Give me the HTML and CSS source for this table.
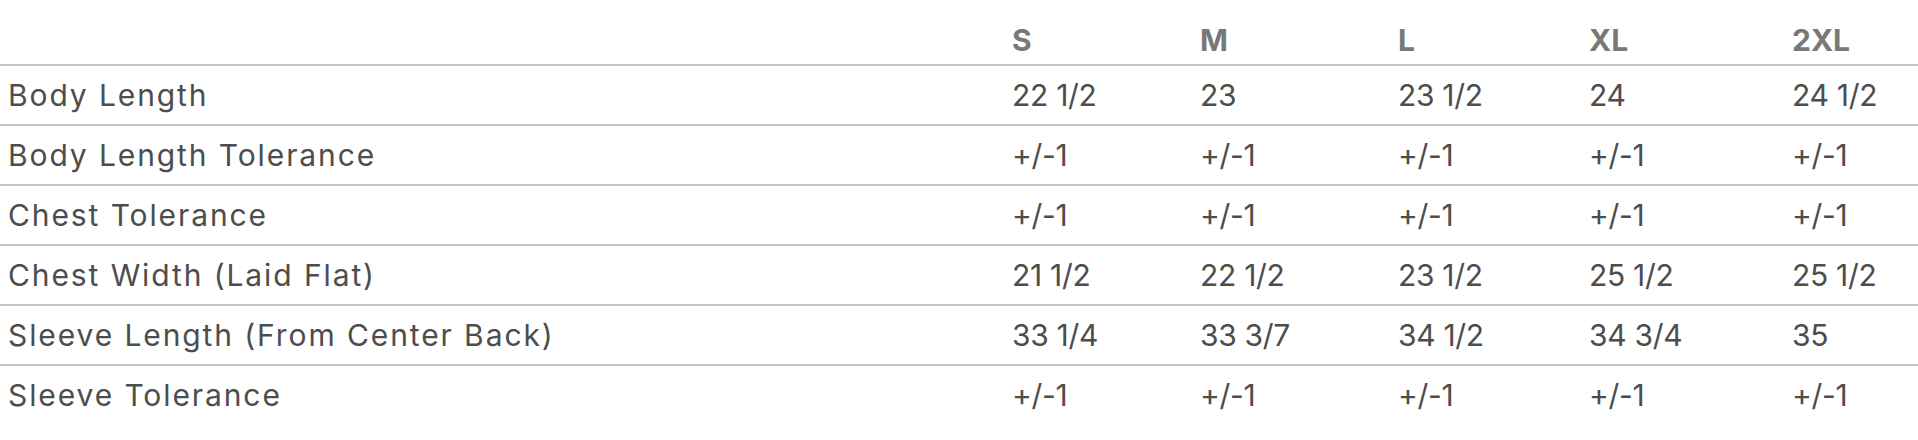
FILE: index.html
```html
<!DOCTYPE html>
<html lang="en">
<head>
<meta charset="utf-8">
<title>Size Chart</title>
<link rel="stylesheet" href="styles.css">
</head>
<body>
<table class="size-table">
  <colgroup>
    <col class="c-label">
    <col class="c-s">
    <col class="c-m">
    <col class="c-l">
    <col class="c-xl">
    <col class="c-2xl">
  </colgroup>
  <thead>
    <tr>
      <th></th>
      <th>S</th>
      <th>M</th>
      <th>L</th>
      <th>XL</th>
      <th>2XL</th>
    </tr>
  </thead>
  <tbody>
    <tr><td class="label">Body Length</td><td>22 1/2</td><td>23</td><td>23 1/2</td><td>24</td><td>24 1/2</td></tr>
    <tr><td class="label">Body Length Tolerance</td><td>+/-1</td><td>+/-1</td><td>+/-1</td><td>+/-1</td><td>+/-1</td></tr>
    <tr><td class="label">Chest Tolerance</td><td>+/-1</td><td>+/-1</td><td>+/-1</td><td>+/-1</td><td>+/-1</td></tr>
    <tr><td class="label">Chest Width (Laid Flat)</td><td>21 1/2</td><td>22 1/2</td><td>23 1/2</td><td>25 1/2</td><td>25 1/2</td></tr>
    <tr><td class="label">Sleeve Length (From Center Back)</td><td>33 1/4</td><td>33 3/7</td><td>34 1/2</td><td>34 3/4</td><td>35</td></tr>
    <tr><td class="label">Sleeve Tolerance</td><td>+/-1</td><td>+/-1</td><td>+/-1</td><td>+/-1</td><td>+/-1</td></tr>
  </tbody>
</table>
</body>
</html>
```
FILE: styles.css
```css
html, body {
  margin: 0;
  padding: 0;
  background: #ffffff;
}

body {
  font-family: "Inter", "Liberation Sans", sans-serif;
  font-size: 30px;
  color: #4d4d4d;
}

.size-table {
  width: 1918px;
  border-collapse: collapse;
  table-layout: fixed;
}

.c-label { width: 1004px; }
.c-s { width: 188px; }
.c-m { width: 198px; }
.c-l { width: 191px; }
.c-xl { width: 203px; }
.c-2xl { width: 134px; }

.size-table th {
  text-align: left;
  font-weight: 700;
  color: #787878;
  line-height: 36px;
  height: 36px;
  padding: 22px 0 6px 8px;
  border-bottom: 2px solid #c4c4c4;
}

.size-table td {
  text-align: left;
  font-weight: 400;
  line-height: 36px;
  height: 36px;
  padding: 11px 0 11px 8px;
  border-bottom: 2px solid #c4c4c4;
  white-space: nowrap;
  letter-spacing: -0.3px;
}

.size-table td.label {
  letter-spacing: 1.9px;
}

.size-table tbody tr:last-child td {
  border-bottom: none;
}
```
